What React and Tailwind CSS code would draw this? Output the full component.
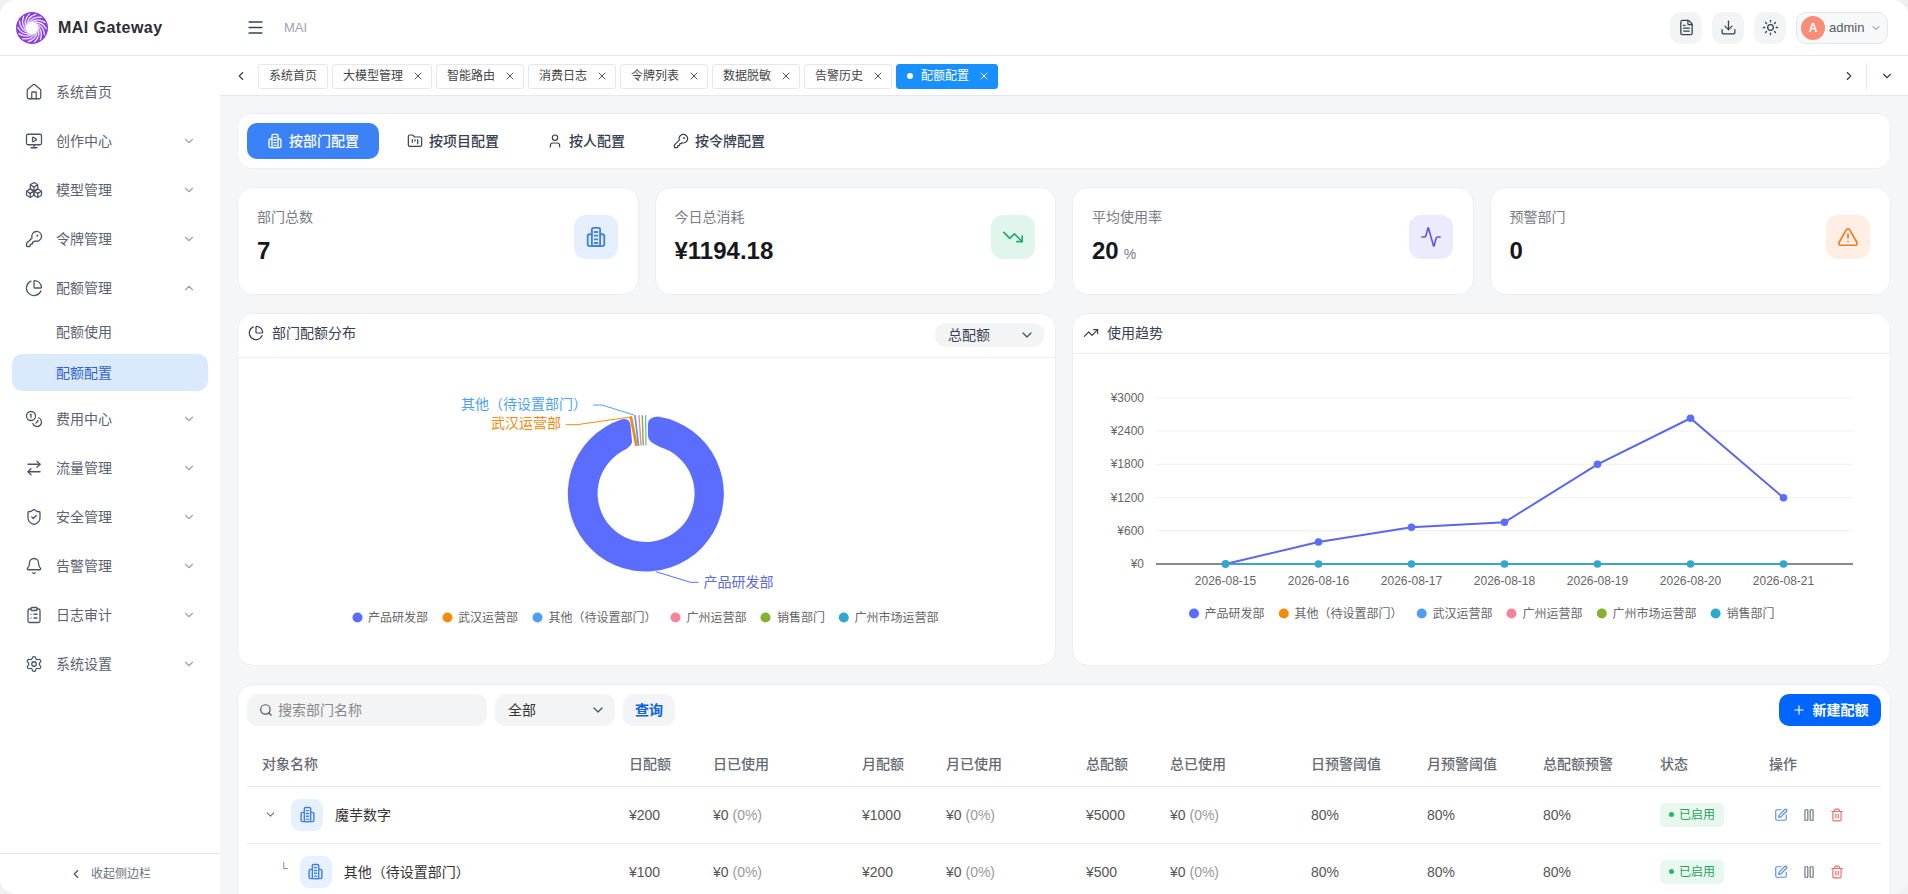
import React from 'react';
import {
  House, MonitorPlay, Boxes, KeyRound, ChartPie, Coins, ArrowRightLeft, ShieldCheck, Bell, ClipboardList, Settings,
  ChevronDown, ChevronUp, ChevronLeft, ChevronRight, Menu, FileText, Download, Sun, X, FolderKanban, User,
  TrendingDown, TrendingUp, Activity, TriangleAlert, Search, Plus, SquarePen, Pause, Trash2,
} from 'lucide-react';

const BuildingIcon = ({ size = 22, className = '' }) => (
  <svg width={size} height={size} viewBox="0 0 24 24" fill="none" stroke="currentColor" strokeWidth="2" strokeLinecap="round" strokeLinejoin="round" className={className}>
    <rect x="7.500" y="2" width="9" height="20" rx="2" />
    <path d="M7.500 9H5a2 2 0 0 0-2 2v9a2 2 0 0 0 2 2h14a2 2 0 0 0 2-2v-9a2 2 0 0 0-2-2h-2.500" />
    <path d="M10.500 6.500h3M10.500 10.500h3M10.500 14.500h3M10.500 18.500h3" />
  </svg>
);

const Logo = () => (
  <svg width="32" height="32" viewBox="0 0 32 32" className="shrink-0">
    <circle cx="16" cy="16" r="16" fill="#8a3fe6" />
    {Array.from({ length: 14 }).map((_, i) => (
      <path key={i} d="M16 10.500C22 9 27 11 30.500 17" fill="none" stroke="#efe4ff" strokeWidth="1.300" transform={`rotate(${i * (360 / 14)} 16 16)`} />
    ))}
    <circle cx="16" cy="16" r="6" fill="#fff" />
  </svg>
);

const menuTop = [
  { label: '系统首页', icon: House },
  { label: '创作中心', icon: MonitorPlay, arrow: true },
  { label: '模型管理', icon: Boxes, arrow: true },
  { label: '令牌管理', icon: KeyRound, arrow: true },
];
const menuBottom = [
  { label: '费用中心', icon: Coins },
  { label: '流量管理', icon: ArrowRightLeft },
  { label: '安全管理', icon: ShieldCheck },
  { label: '告警管理', icon: Bell },
  { label: '日志审计', icon: ClipboardList },
  { label: '系统设置', icon: Settings },
];

const MenuItem = ({ label, icon: Icon, arrow = true, open = false }) => (
  <div className="flex h-[49px] items-center pl-[25px] pr-[24px] text-sm text-[#5b6370]">
    <Icon size={18} strokeWidth={1.7} className="shrink-0 text-[#4b5563]" />
    <span className="ml-[13px] flex-1">{label}</span>
    {arrow && (open ? <ChevronUp size={14} className="text-[#9ca3af]" /> : <ChevronDown size={14} className="text-[#9ca3af]" />)}
  </div>
);

const Sidebar = () => (
  <aside className="flex w-[220px] shrink-0 flex-col bg-white">
    <nav className="flex-1 pt-[11px]">
      <MenuItem {...menuTop[0]} arrow={false} />
      {menuTop.slice(1).map((m) => <MenuItem key={m.label} {...m} />)}
      <MenuItem label="配额管理" icon={ChartPie} open />
      <div className="mb-[3px] mt-[1px] flex flex-col gap-[4px]">
        <div className="flex h-[37px] items-center pl-[56px] text-sm text-[#5b6370]">配额使用</div>
        <div className="mx-[12px] flex h-[37px] items-center rounded-[10px] bg-[#dbe9fd] pl-[44px] text-sm text-[#2f62d3]">配额配置</div>
      </div>
      {menuBottom.map((m) => <MenuItem key={m.label} {...m} />)}
    </nav>
    <div className="flex h-[41px] items-center justify-center gap-[8px] border-t border-[#e5e7eb] text-xs text-[#6b7280]">
      <ChevronLeft size={14} className="text-[#4b5563]" />
      <span>收起侧边栏</span>
    </div>
  </aside>
);

const HeaderBtn = ({ icon: Icon }) => (
  <div className="flex h-[32px] w-[32px] items-center justify-center rounded-[10px] bg-[#f3f4f6] text-[#374151]">
    <Icon size={17} strokeWidth={1.8} />
  </div>
);

const Header = () => (
  <header className="flex h-[56px] shrink-0 items-center border-b border-[#e5e7eb] bg-white">
    <div className="flex w-[220px] items-center pl-[16px]">
      <Logo />
      <span className="ml-[10px] text-base font-bold tracking-[0.45px] text-[#2d2d33]">MAI Gateway</span>
    </div>
    <Menu size={19} className="ml-[26px] text-[#374151]" />
    <span className="ml-[19px] flex-1 text-[13px] text-[#9ca3af]">MAI</span>
    <div className="mr-[20px] flex items-center gap-[10px]">
      <HeaderBtn icon={FileText} />
      <HeaderBtn icon={Download} />
      <HeaderBtn icon={Sun} />
      <div className="flex h-[32px] w-[92px] items-center rounded-[10px] border border-[#e5e7eb] bg-[#f7f8fa] pl-[4px]">
        <div className="flex h-[24px] w-[24px] items-center justify-center rounded-full bg-[#f98d78] text-xs font-bold text-white">A</div>
        <span className="ml-[4px] text-[13px] text-[#555b66]">admin</span>
        <ChevronDown size={12} className="ml-[6px] text-[#6b7280]" />
      </div>
    </div>
  </header>
);

const tabs = ['大模型管理', '智能路由', '消费日志', '令牌列表', '数据脱敏', '告警历史'];

const TabBar = () => (
  <div className="flex h-[40px] shrink-0 items-center border-b border-[#e5e7eb] bg-white pt-[1px]">
    <ChevronLeft size={14} className="ml-[14px] text-[#374151]" />
    <div className="ml-[10px] flex flex-1 items-center gap-[4px] text-xs text-[#444]">
      <div className="flex h-[25px] items-center rounded-[3px] border border-[#e5e7eb] px-[10px]">系统首页</div>
      {tabs.map((t) => (
        <div key={t} className="flex h-[25px] items-center rounded-[3px] border border-[#e5e7eb] pl-[10px] pr-[7px]">
          {t}
          <X size={12} className="ml-[9px] text-[#555]" />
        </div>
      ))}
      <div className="flex h-[25px] items-center rounded-[3px] border border-[#1890ff] bg-[#1890ff] pl-[10px] pr-[7px] text-white">
        <span className="mr-[8px] h-[6px] w-[6px] rounded-full bg-white" />
        配额配置
        <X size={12} className="ml-[9px]" />
      </div>
    </div>
    <ChevronRight size={14} className="text-[#374151]" />
    <div className="ml-[10px] h-[26px] w-px bg-[#e5e7eb]" />
    <ChevronDown size={14} className="ml-[13px] mr-[14px] text-[#374151]" />
  </div>
);

const modes = [
  { label: '按部门配置', icon: BuildingIcon, active: true },
  { label: '按项目配置', icon: FolderKanban },
  { label: '按人配置', icon: User },
  { label: '按令牌配置', icon: KeyRound },
];

const ModeTabs = () => (
  <div className="flex h-[56px] shrink-0 items-center gap-[8px] rounded-[14px] border border-[#eceef1] bg-white pl-[9px]">
    {modes.map(({ label, icon: Icon, active }) => (
      <div key={label} className={active
        ? 'flex h-[36px] items-center gap-[6px] rounded-[10px] bg-[#3b82f6] px-[20px] text-sm font-medium text-white'
        : 'flex h-[36px] items-center gap-[6px] rounded-[10px] px-[20px] text-sm font-medium text-[#374151]'}>
        <Icon size={16} strokeWidth={1.8} />
        {label}
      </div>
    ))}
  </div>
);

const stats = [
  { label: '部门总数', value: '7', icon: BuildingIcon, box: 'bg-[#e5effe] text-[#3f7fe6]' },
  { label: '今日总消耗', value: '¥1194.18', icon: TrendingDown, box: 'bg-[#e0f5ec] text-[#1faa72]' },
  { label: '平均使用率', value: '20', unit: '%', icon: Activity, box: 'bg-[#ecebfd] text-[#5b5be6]' },
  { label: '预警部门', value: '0', icon: TriangleAlert, box: 'bg-[#feeee3] text-[#ef7a24]' },
];

const StatCards = () => (
  <div className="grid shrink-0 grid-cols-4 gap-4">
    {stats.map(({ label, value, unit, icon: Icon, box }) => (
      <div key={label} className="flex h-[108px] items-start justify-between rounded-[16px] border border-[#eceef1] bg-white pl-[19px] pr-[20px] pt-[19px]">
        <div>
          <div className="h-[20px] text-sm leading-[20px] text-[#777c85]">{label}</div>
          <div className="mt-[8px] flex h-[32px] items-baseline text-2xl font-bold leading-[32px] text-[#16181d]">
            {value}
            {unit && <span className="ml-[5px] text-sm font-normal text-[#777c85]">{unit}</span>}
          </div>
        </div>
        <div className={`mt-[8px] flex h-[44px] w-[44px] items-center justify-center rounded-[12px] ${box}`}>
          <Icon size={22} strokeWidth={1.8} />
        </div>
      </div>
    ))}
  </div>
);

const C = { indigo: '#5b6dff', orange: '#f28c0f', blue: '#4f9ff0', pink: '#f6839b', green: '#86b02d', teal: '#2fa8cd' };

const Legend = ({ items, y }) => items.map(([label, color, dot, tx]) => (
  <g key={label}>
    <circle cx={dot} cy={y} r="5" fill={color} />
    <text x={tx} y={y + 4.500} fontSize="12" fill="#666">{label}</text>
  </g>
));

const DonutChart = () => (
  <svg width="817" height="308" viewBox="238 358 817 308" className="block">
    <path
      d="M648 424Q648 417 658 416.500A78 78 0 1 1 621.900 419.300Q629.500 417.500 630.500 425L632 441Q632.500 446 623 450.800A48.500 48.500 0 1 0 660 447Q648 442 648 436Z"
      fill={C.indigo}
    />
    <path d="M631 417.500L636.300 445" stroke={C.orange} strokeWidth="2.800" strokeLinecap="round" />
    <path d="M635 416L638.500 445" stroke={C.blue} strokeWidth="1.800" strokeLinecap="round" />
    <path d="M639 415.700L641 445" stroke={C.pink} strokeWidth="1.400" strokeLinecap="round" />
    <path d="M642.300 415.700L643.200 445" stroke={C.green} strokeWidth="1.400" strokeLinecap="round" />
    <path d="M645.700 415.700L646 445" stroke={C.teal} strokeWidth="1" strokeLinecap="round" />
    <path d="M593 405H602L634 415" fill="none" stroke={C.blue} strokeWidth="1" />
    <path d="M566 424.700H577L630.500 417" fill="none" stroke={C.orange} strokeWidth="1" />
    <path d="M656 571.700L690.600 582.300H698.600" fill="none" stroke={C.indigo} strokeWidth="1" />
    <text x="461" y="409" fontSize="14" fill={C.blue}>其他（待设置部门）</text>
    <text x="491" y="427.500" fontSize="14" fill={C.orange}>武汉运营部</text>
    <text x="703.500" y="587" fontSize="14" fill="#5b6bd8">产品研发部</text>
    <Legend
      y={617.500}
      items={[
        ['产品研发部', C.indigo, 357.500, 368],
        ['武汉运营部', C.orange, 447.500, 458],
        ['其他（待设置部门）', C.blue, 537.500, 548.500],
        ['广州运营部', C.pink, 675.500, 686.500],
        ['销售部门', C.green, 765.500, 777],
        ['广州市场运营部', C.teal, 843.800, 854.500],
      ]}
    />
  </svg>
);

const yTicks = [['¥3000', 398], ['¥2400', 431], ['¥1800', 464.300], ['¥1200', 497.700], ['¥600', 530.700]];
const xs = [1225.500, 1318.500, 1411.500, 1504.500, 1597.500, 1690.500, 1783.500];
const dates = ['2026-08-15', '2026-08-16', '2026-08-17', '2026-08-18', '2026-08-19', '2026-08-20', '2026-08-21'];
const trend = [564, 542, 527.300, 522.300, 464.300, 418.300, 497.700];

const LineChart = () => (
  <svg width="817" height="312" viewBox="1073 354 817 312" className="block">
    {yTicks.map(([label, y]) => (
      <g key={label}>
        <line x1="1156" x2="1853" y1={y} y2={y} stroke="#f0f1f3" strokeWidth="1" />
        <text x="1144" y={y + 4} fontSize="12" textAnchor="end" fill="#666">{label}</text>
      </g>
    ))}
    <text x="1144" y="568" fontSize="12" textAnchor="end" fill="#666">¥0</text>
    <line x1="1156" x2="1853" y1="564" y2="564" stroke="#8a8a8a" strokeWidth="2" />
    <polyline points={xs.map((x, i) => `${x},${trend[i]}`).join(' ')} fill="none" stroke="#5b68e6" strokeWidth="2" />
    {xs.map((x, i) => <circle key={x} cx={x} cy={trend[i]} r="3.800" fill={C.indigo} />)}
    <line x1={xs[0]} x2={xs[6]} y1="564" y2="564" stroke="#3fa3c4" strokeWidth="2" />
    {xs.map((x, i) => (
      <g key={x}>
        <circle cx={x} cy="564" r="3.800" fill={C.teal} />
        <text x={x} y="585" fontSize="12" textAnchor="middle" fill="#666">{dates[i]}</text>
      </g>
    ))}
    <Legend
      y={613.500}
      items={[
        ['产品研发部', C.indigo, 1194, 1204.500],
        ['其他（待设置部门）', C.orange, 1283.800, 1294.500],
        ['武汉运营部', C.blue, 1421.700, 1432.500],
        ['广州运营部', C.pink, 1511.500, 1522.500],
        ['广州市场运营部', C.green, 1601.800, 1612.500],
        ['销售部门', C.teal, 1715.600, 1726.500],
      ]}
    />
  </svg>
);

const Charts = () => (
  <div className="grid shrink-0 grid-cols-2 gap-4">
    <div className="h-[353px] overflow-hidden rounded-[16px] border border-[#eceef1] bg-white">
      <div className="flex h-[44px] items-start justify-between border-b border-[#eceef1] pl-[10px] pr-[11px]">
        <div className="flex h-[37px] items-center gap-[8px] text-sm text-[#374151]">
          <ChartPie size={16} strokeWidth={1.8} />
          部门配额分布
        </div>
        <div className="mt-[9px] flex h-[24px] w-[109px] items-center justify-between rounded-[10px] bg-[#f3f4f6] pl-[13px] pr-[9px] text-sm text-[#374151]">
          总配额
          <ChevronDown size={16} className="text-[#4b5563]" />
        </div>
      </div>
      <DonutChart />
    </div>
    <div className="h-[353px] overflow-hidden rounded-[16px] border border-[#eceef1] bg-white">
      <div className="flex h-[40px] items-center gap-[8px] border-b border-[#eceef1] pb-[2px] pl-[10px] text-sm text-[#374151]">
        <TrendingUp size={16} strokeWidth={1.8} />
        使用趋势
      </div>
      <LineChart />
    </div>
  </div>
);

const cols = [
  ['对象名称', 'w-[366px] pl-[15px]'], ['日配额', 'w-[84px] pl-[16px]'], ['日已使用', 'w-[149px] pl-[16px]'], ['月配额', 'w-[84px] pl-[16px]'],
  ['月已使用', 'w-[140px] pl-[16px]'], ['总配额', 'w-[84px] pl-[16px]'], ['总已使用', 'w-[141px] pl-[16px]'], ['日预警阈值', 'w-[116px] pl-[16px]'],
  ['月预警阈值', 'w-[116px] pl-[16px]'], ['总配额预警', 'w-[117px] pl-[16px]'], ['状态', 'w-[109px] pl-[16px]'], ['操作', 'w-[128px] pl-[16px]'],
];

const rows = [
  { name: '魔芋数字', parent: true, day: '¥200', month: '¥1000', total: '¥5000' },
  { name: '其他（待设置部门）', day: '¥100', month: '¥200', total: '¥500' },
];

const Used = () => <td className="pl-[16px]">¥0 <span className="text-[#999]">(0%)</span></td>;

const QuotaTable = () => (
  <div className="shrink-0 rounded-[16px] border border-[#eceef1] bg-white px-[9px] pt-[9px] pb-[20px]">
    <div className="flex h-[32px] items-center gap-[8px] text-sm">
      <div className="flex h-[32px] w-[240px] items-center gap-[5px] rounded-[10px] bg-[#f3f4f6] pl-[12px] text-[#888]">
        <Search size={14} className="text-[#4b5563]" />
        搜索部门名称
      </div>
      <div className="flex h-[32px] w-[120px] items-center justify-between rounded-[10px] bg-[#f3f4f6] pl-[13px] pr-[9px] text-[#333]">
        全部
        <ChevronDown size={16} className="text-[#4b5563]" />
      </div>
      <div className="flex h-[32px] w-[52px] items-center justify-center rounded-[10px] bg-[#f3f4f6] font-semibold text-[#0b62d9]">查询</div>
      <div className="ml-auto flex h-[32px] w-[102px] items-center justify-center gap-[7px] rounded-[10px] bg-[#0066ff] font-semibold text-white">
        <Plus size={14} />
        新建配额
      </div>
    </div>
    <table className="mt-[16px] w-[1634px] table-fixed border-collapse text-sm text-[#555]">
      <thead>
        <tr className="h-[44px] border-b border-[#e8eaed] text-left">
          {cols.map(([label, cls]) => <th key={label} className={`${cls} font-medium text-[#666b73]`}>{label}</th>)}
        </tr>
      </thead>
      <tbody>
        {rows.map((r) => (
          <tr key={r.name} className="h-[57px] border-b border-[#e8eaed]">
            <td>
              <div className={r.parent ? 'flex items-center pl-[17px]' : 'flex items-center pl-[33px]'}>
                {r.parent
                  ? <ChevronDown size={13} className="mr-[14px] text-[#6b7280]" />
                  : <span className="mr-[12px] -mt-[6px] text-[11px] text-[#777]">└</span>}
                <div className="flex h-[32px] w-[32px] items-center justify-center rounded-[9px] bg-[#e7f0fe] text-[#3f7fe6]">
                  <BuildingIcon size={17} />
                </div>
                <span className="ml-[12px] text-[#333]">{r.name}</span>
              </div>
            </td>
            <td className="pl-[16px]">{r.day}</td>
            <Used />
            <td className="pl-[16px]">{r.month}</td>
            <Used />
            <td className="pl-[16px]">{r.total}</td>
            <Used />
            <td className="pl-[16px]">80%</td>
            <td className="pl-[16px]">80%</td>
            <td className="pl-[16px]">80%</td>
            <td className="pl-[16px]">
              <span className="inline-flex h-[24px] w-[64px] items-center justify-center gap-[5px] rounded-[5px] bg-[#e8f8ee] text-xs text-[#27a35c]">
                <span className="h-[5px] w-[5px] rounded-full bg-[#27b566]" />
                已启用
              </span>
            </td>
            <td className="pl-[21px]">
              <div className="flex items-center gap-[14px]">
                <SquarePen size={14} className="text-[#5b8def]" />
                <Pause size={14} className="text-[#6b7280]" />
                <Trash2 size={14} className="text-[#ef6a6a]" />
              </div>
            </td>
          </tr>
        ))}
      </tbody>
    </table>
  </div>
);

export default function App() {
  return (
    <div className="h-[894px] w-[1908px] overflow-hidden bg-[#eef0f2] font-['Liberation_Sans','Noto_Sans_CJK_SC',sans-serif]">
      <div className="flex h-full flex-col overflow-hidden rounded-[16px] bg-white">
        <Header />
        <div className="flex min-h-0 flex-1">
          <Sidebar />
          <div className="flex min-w-0 flex-1 flex-col">
            <TabBar />
            <main className="flex flex-1 flex-col gap-[18px] overflow-hidden bg-[#f5f6f8] px-[17px] pt-[17px]">
              <ModeTabs />
              <StatCards />
              <Charts />
              <QuotaTable />
            </main>
          </div>
        </div>
      </div>
    </div>
  );
}
